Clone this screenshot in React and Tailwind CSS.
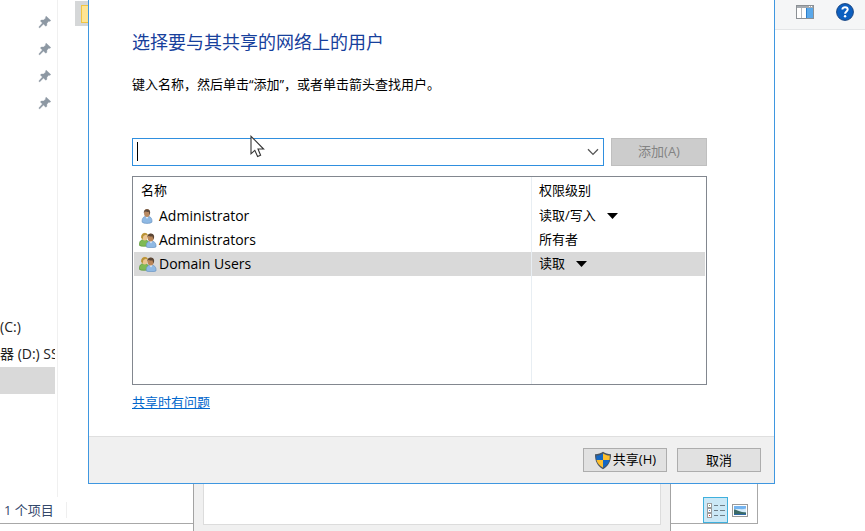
import React, { useState } from "react";

const FONT = "font-['Open_Sans','Noto_Sans_CJK_SC',sans-serif]";

const members = [
  { id: 1, name: "Administrator", group: false, level: "读取/写入", editable: true },
  { id: 2, name: "Administrators", group: true, level: "所有者", editable: false },
  { id: 3, name: "Domain Users", group: true, level: "读取", editable: true },
];

const levels = ["读取", "读取/写入", "删除"];

const PinIcon = () => (
  <svg width="14" height="14" viewBox="0 0 14 14" aria-hidden="true">
    <path
      d="M8.2 1.2 12.8 5.6 11.6 6.4 10.9 6.1 8.9 8.2 8.8 10.4 7.7 11.2 5.5 9 1.6 12.9.8 12.1 4.4 8 2.4 6 3.3 5 5.6 5 7.8 3 7.5 2.1Z"
      fill="#8d98a3"
      stroke="#8d98a3"
      strokeWidth="0.4"
    />
  </svg>
);

const PaneIcon = () => (
  <svg width="18" height="14" viewBox="0 0 18 14" aria-hidden="true">
    <rect x="0.5" y="0.5" width="17" height="13" fill="#fff" stroke="#8b9095" />
    <rect x="1" y="1" width="16" height="2" fill="#a6abb0" />
    <path d="M13 1.5h1M15 1.5h1" stroke="#fff" />
    <path d="M5.5 3v10" stroke="#b5b9bd" />
    <rect x="10" y="3" width="7" height="10" fill="#5aa8ea" />
    <path d="M10.5 3v10" stroke="#2d7fcb" />
  </svg>
);

const HelpIcon = () => (
  <svg width="18" height="18" viewBox="0 0 18 18" aria-hidden="true">
    <circle cx="9" cy="9" r="8.4" fill="#0c5fc0" stroke="#1b4783" />
    <path
      d="M6.4 6.6C6.4 3.4 11.7 3.5 11.7 6.6C11.7 8.5 9.1 8.6 9.1 10.8"
      fill="none"
      stroke="#fff"
      strokeWidth="2"
    />
    <circle cx="9.1" cy="13.2" r="1.2" fill="#fff" />
  </svg>
);

const UserIcon = () => (
  <svg width="18" height="16" viewBox="0 0 18 16" aria-hidden="true">
    <path d="M3.2 14.2C2.7 9.8 5 8.2 8 8.2s5.4 1.6 4.9 6C11.4 15.8 4.7 15.8 3.2 14.2Z" fill="#8fb9e4" stroke="#6a93c2" strokeWidth="0.7" />
    <path d="M6.4 8.2 8 11l1.5-2.8Z" fill="#eaf3fb" />
    <ellipse cx="8" cy="5" rx="3" ry="4" fill="#b98a62" />
    <path d="M4.8 5.2C4.2.2 11.4 0 11.2 4.8L10.5 7 9.8 3.8C8.2 4.3 6.4 3.6 5.8 3.6Z" fill="#5d4a3d" />
  </svg>
);

const GroupIcon = () => (
  <svg width="18" height="16" viewBox="0 0 18 16" aria-hidden="true">
    <path d="M.5 13.4C0 9 2.4 7.6 5.2 7.6S10 9 9.6 13.4C8 14.6 2 14.6.5 13.4Z" fill="#7fba55" stroke="#5c963a" strokeWidth="0.7" />
    <ellipse cx="5.7" cy="4.6" rx="3" ry="3.9" fill="#ecc592" />
    <path d="M2.2 6C1.2.2 8.8-.6 9 3.6L6.7 2.8 4.4 4 3.6 7.6Z" fill="#b89336" />
    <path d="M7.3 14.9C6.8 10.8 9 9 12 9s5.4 1.8 5 5.9C15.4 16 8.6 16 7.3 14.9Z" fill="#8fb9e4" stroke="#6a93c2" strokeWidth="0.7" />
    <path d="M10.4 9 12 11.6 13.5 9Z" fill="#eaf3fb" />
    <ellipse cx="11.7" cy="5.6" rx="3.1" ry="3.9" fill="#b98558" />
    <path d="M8.3 5.4C8 .3 15.2.3 15.2 5L14.4 7.6 13.4 4.3C11.8 4.8 10 4 9.2 4Z" fill="#5b4636" />
  </svg>
);

const ShieldIcon = () => (
  <svg width="18" height="19" viewBox="0 0 18 19" aria-hidden="true">
    <path d="M9 .8C11 2.4 14 3.2 17 3.2 17.2 10 14.5 15 9 18.2 3.5 15 .8 10 1 3.2 4 3.2 7 2.4 9 .8Z" fill="#4a5560" />
    <path d="M9 2.4V9H2.5C2.3 7.6 2.2 6 2.3 4.5 4.8 4.4 7 3.7 9 2.4Z" fill="#1467c4" />
    <path d="M9 2.4V9h6.5C15.7 7.6 15.8 6 15.7 4.5 13.2 4.4 11 3.7 9 2.4Z" fill="#fdbf2d" />
    <path d="M9 9v7.7C5.4 14.5 3.2 12.1 2.5 9Z" fill="#fdbf2d" />
    <path d="M9 9v7.7c3.6-2.2 5.8-4.6 6.5-7.7Z" fill="#1467c4" />
  </svg>
);

const DetailsIcon = () => (
  <svg width="18" height="15" viewBox="0 0 18 15" aria-hidden="true">
    <g fill="#fff" stroke="#9b9b9b">
      <rect x="0.5" y="0.5" width="4" height="4" />
      <rect x="0.5" y="5.5" width="4" height="4" />
      <rect x="0.5" y="10.5" width="4" height="4" />
    </g>
    <path d="M2 2.5h1" stroke="#6f9b62" />
    <path d="M2 7.5h1" stroke="#4c8fd6" />
    <path d="M2 12.5h1" stroke="#e0402f" />
    <path d="M7 2.5h4M13 2.5h5M7 7.5h4M13 7.5h5M7 12.5h4M13 12.5h5" stroke="#6f7f88" />
  </svg>
);

const ThumbIcon = () => (
  <svg width="16" height="13" viewBox="0 0 16 13" aria-hidden="true">
    <rect x="0.5" y="0.5" width="15" height="12" fill="#fff" stroke="#9a9a9a" />
    <rect x="2" y="2" width="12" height="9" fill="#74b4f0" />
    <path d="M2 5.5C5 4 9 6 14 4.6V8.4H2Z" fill="#d6ebf8" />
    <path d="M2 5.6C5 5.6 8 8.4 14 8.6V11H2Z" fill="#3b6a66" />
    <path d="M2 10.5h12" stroke="#2e6aa8" />
  </svg>
);

const Pointer = () => (
  <svg
    className="pointer-events-none absolute top-[135px] left-[161px]"
    width="15"
    height="23"
    viewBox="0 0 15 23"
    aria-hidden="true"
  >
    <path
      d="M1 1.3V18.8L4.8 15.3 7.6 21.5 10.6 20.2 8 14H13.6Z"
      fill="#fff"
      stroke="#333"
      strokeWidth="1.1"
    />
  </svg>
);

function MainToolbar() {
  return (
    <div className="flex h-[30px] items-start justify-end gap-[22px] border-b border-[#e4e6e8] bg-[#f5f6f7] pt-[3px] pr-[11px]">
      <button type="button" aria-label="预览窗格" className="pt-[2px]">
        <PaneIcon />
      </button>
      <button type="button" aria-label="帮助">
        <HelpIcon />
      </button>
    </div>
  );
}

function Explorer() {
  return (
    <div className="absolute top-[30px] right-[107px] bottom-[7px] left-0 border-r border-b border-[#a8a8a8] bg-white" />
  );
}

function ExplorerContent() {
  return (
    <div className="absolute top-0 right-[108px] bottom-2 left-0 flex flex-col bg-white">
      <div className="flex min-h-0 flex-1">
        <nav className="flex w-[58px] flex-col border-r border-[#f0f0f0] pt-2 text-[14px] text-[#222]">
          {[1, 2, 3, 4].map((n) => (
            <button
              key={n}
              type="button"
              aria-label="固定"
              className="flex h-[27px] shrink-0 items-center justify-end pr-[5px]"
            >
              <PinIcon />
            </button>
          ))}
          <div className="mt-[197px] w-[55px] overflow-hidden whitespace-nowrap">
            <a href="#c" className="block h-[27px] leading-[27px]">(C:)</a>
            <a href="#d" className="block h-[27px] leading-[27px]">器 (D:) SS</a>
            <div className="h-[27px] bg-[#d9d9d9]" />
          </div>
        </nav>
        <div className="flex-1 pt-px pl-[17px]">
          <div className="flex h-[25px] w-16 items-center bg-[#d5d7d8] pl-[6px]">
            <div className="h-[18px] w-8 border border-[#f0c544] bg-[#ffe594]" />
          </div>
        </div>
      </div>
      <div className="flex h-[26px] items-center justify-between">
        <span className="border-r border-[#efefef] pr-3 pl-1 text-[13px] leading-4 text-[#33486b]">
          1 个项目
        </span>
        <div className="flex items-center gap-1 pr-[9px]">
          <button
            type="button"
            aria-label="详细信息"
            className="flex h-[26px] w-[25px] items-center justify-center border border-[#3fb0dd] bg-[#cbe8f6]"
          >
            <DetailsIcon />
          </button>
          <button type="button" aria-label="大图标">
            <ThumbIcon />
          </button>
        </div>
      </div>
    </div>
  );
}

function PropertiesWindow() {
  return (
    <div className="absolute top-1/2 right-[194px] bottom-0 left-[193px] border-x border-[#a3a3a3] bg-[#f0f0f0] px-[9px] pb-[6px]">
      <div className="h-full border border-[#dcdcdc] bg-white" />
    </div>
  );
}

function LevelPicker({ member }) {
  const [level, setLevel] = useState(member.level);

  if (!member.editable) return <span>{level}</span>;

  return (
    <span className="flex items-center gap-[11px]">
      <select
        value={level}
        onChange={(e) => setLevel(e.target.value)}
        aria-label={`${member.name} 权限级别`}
        className="field-sizing-content appearance-none bg-transparent outline-none"
      >
        {levels.map((l) => (
          <option key={l}>{l}</option>
        ))}
      </select>
      <svg width="11" height="6" viewBox="0 0 11 6" aria-hidden="true">
        <path d="M0 0H11L5.5 6Z" fill="#000" />
      </svg>
    </span>
  );
}

function MemberTable() {
  const [selected, setSelected] = useState(3);

  return (
    <div className="mt-[10px] flex h-[209px] flex-col border border-[#82878f] px-px">
      <table className="w-full table-fixed border-separate border-spacing-0 text-left text-[13px] text-black">
        <colgroup>
          <col />
          <col className="w-[173px]" />
        </colgroup>
        <thead>
          <tr className="h-[27px]">
            <th className="border-r border-[#e8eef3] p-0 pl-[7px] font-normal">名称</th>
            <th className="p-0 pl-[7px] font-normal">权限级别</th>
          </tr>
        </thead>
        <tbody>
          {members.map((m) => (
            <tr
              key={m.id}
              onClick={() => setSelected(m.id)}
              className={selected === m.id ? "h-6 bg-[#d9d9d9]" : "h-6"}
            >
              <td className="border-r border-[#e8eef3] p-0 pl-[5px]">
                <span className="flex items-center gap-[2px] text-[14px] leading-5">
                  {m.group ? <GroupIcon /> : <UserIcon />}
                  {m.name}
                </span>
              </td>
              <td className="p-0 pl-[7px]">
                <LevelPicker member={m} />
              </td>
            </tr>
          ))}
        </tbody>
      </table>
      <div className="mr-[173px] flex-1 border-r border-[#e8eef3]" />
    </div>
  );
}

function ShareDialog() {
  const [query, setQuery] = useState("");

  return (
    <div
      role="dialog"
      aria-labelledby="share-title"
      className="absolute top-0 right-[90px] left-[88px] border border-t-0 border-[#3f97e0] bg-white"
    >
      <div className="flex flex-col pt-[30px] pr-[67px] pb-6 pl-[43px]">
        <h1 id="share-title" className="text-[18px] leading-6 text-[#17409c]">
          选择要与其共享的网络上的用户
        </h1>
        <p className="mt-5 text-[13px] leading-5 text-black">
          键入名称，然后单击“添加”，或者单击箭头查找用户。
        </p>
        <div className="mt-[44px] flex h-7 gap-[7px]">
          <div className="relative flex flex-1 border border-[#2f8fdf]">
            <input
              type="text"
              aria-label="用户名称"
              value={query}
              onChange={(e) => setQuery(e.target.value)}
              className="min-w-0 flex-1 px-1 text-[13px] outline-none"
            />
            <button type="button" aria-label="查找用户" className="px-1">
              <svg width="12" height="8" viewBox="0 0 12 8" aria-hidden="true">
                <path d="M1 1.2 6 6.4 11 1.2" fill="none" stroke="#555" strokeWidth="1.3" />
              </svg>
            </button>
            {!query && <span className="absolute top-[3px] left-1 h-[19px] w-px bg-black" />}
          </div>
          <button
            type="button"
            disabled
            className="w-24 border border-[#bfbfbf] bg-[#cccccc] text-[13px] text-[#838383]"
          >
            添加(A)
          </button>
        </div>
        <MemberTable />
        <a
          href="#help"
          className="mt-2 self-start text-[13px] leading-[18px] text-[#0066cc] underline"
        >
          共享时有问题
        </a>
      </div>
      <div className="mt-px flex h-[47px] items-center justify-end gap-[10px] border-t border-[#dfdfdf] bg-[#f0f0f0] pr-[13px]">
        <button
          type="button"
          className="flex h-6 w-[84px] items-center justify-center gap-px border border-[#adadad] bg-[#e1e1e1] text-[13px] text-black"
        >
          <ShieldIcon />
          共享(H)
        </button>
        <button
          type="button"
          className="h-6 w-[84px] border border-[#adadad] bg-[#e1e1e1] text-[13px] leading-5 text-black"
        >
          取消
        </button>
      </div>
      <Pointer />
    </div>
  );
}

export default function App() {
  return (
    <div className={`relative h-screen w-full overflow-hidden bg-white ${FONT}`}>
      <MainToolbar />
      <Explorer />
      <ExplorerContent />
      <PropertiesWindow />
      <ShareDialog />
    </div>
  );
}
